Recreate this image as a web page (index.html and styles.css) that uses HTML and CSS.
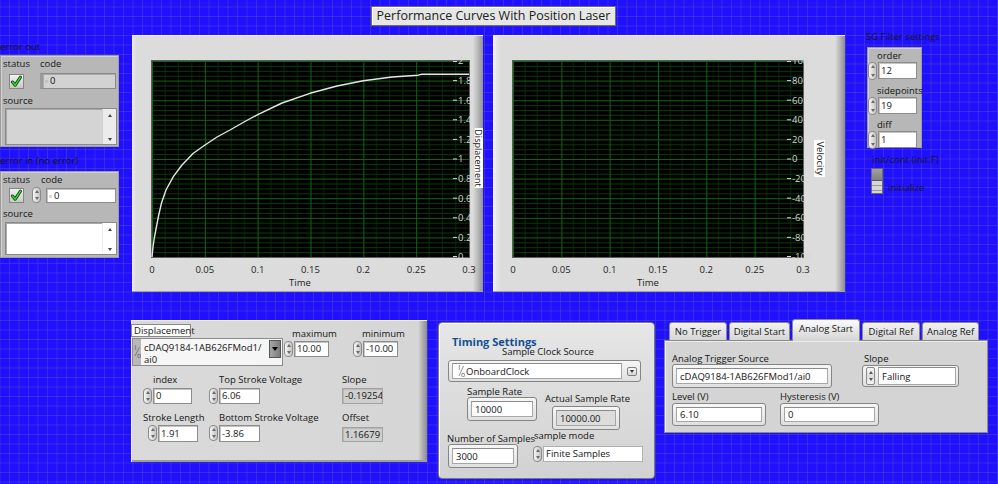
FILE: index.html
```html
<!DOCTYPE html>
<html lang="en">
<head>
<meta charset="utf-8">
<title>Performance Curves With Position Laser</title>
<link rel="stylesheet" href="styles.css">
</head>
<body>
<main class="fp">
  <div class="title">Performance Curves With Position Laser</div>

  <!-- error out -->
  <section class="obj errout">
    <div class="clabel">error out</div>
    <div class="ec ec-out">
      <div class="ec-top">
        <div class="ec-status">
          <span class="lbl">status</span>
          <span class="chk"><svg width="13" height="13" viewBox="0 0 13 13"><path d="M2.5 7 L5.2 10.2 L10.5 2.2" fill="none" stroke="#0b3b0b" stroke-width="3" stroke-linecap="round" stroke-linejoin="round"/><path d="M2.5 7 L5.2 10.2 L10.5 2.2" fill="none" stroke="#35e035" stroke-width="1.4" stroke-linecap="round" stroke-linejoin="round"/></svg></span>
        </div>
        <div class="ec-code">
          <span class="lbl">code</span>
          <div class="codeind"><span class="rep">&#8728;</span>0</div>
        </div>
      </div>
      <span class="lbl src-lbl">source</span>
      <div class="srcbox srcbox-ind"><div class="sbar"><span class="sa up"></span><span class="sa dn"></span></div></div>
    </div>
  </section>

  <!-- error in -->
  <section class="obj errin">
    <div class="clabel">error in (no error)</div>
    <div class="ec ec-in">
      <div class="ec-top">
        <div class="ec-status ec-status-in">
          <span class="lbl">status</span>
          <span class="chk chk-in"><svg width="13" height="13" viewBox="0 0 13 13"><path d="M2.5 7 L5.2 10.2 L10.5 2.2" fill="none" stroke="#0b3b0b" stroke-width="3" stroke-linecap="round" stroke-linejoin="round"/><path d="M2.5 7 L5.2 10.2 L10.5 2.2" fill="none" stroke="#35e035" stroke-width="1.4" stroke-linecap="round" stroke-linejoin="round"/></svg></span>
        </div>
        <div class="ec-code-in">
          <span class="lbl">code</span>
          <div class="nrow code-row"><span class="spin"></span><div class="num code-num"><span class="rep">&#8728;</span>0</div></div>
        </div>
      </div>
      <span class="lbl src-lbl-in">source</span>
      <div class="srcbox srcbox-ctl"><div class="sbar sbar-w"><span class="sa up"></span><span class="sa dn"></span></div></div>
    </div>
  </section>

  <!-- Graph 1 -->
  <section class="graph g1">
    <svg width="351" height="257" viewBox="0 0 351 257">
      <defs>
        <pattern id="pg1" x="20" y="26" width="52.833" height="19.6" patternUnits="userSpaceOnUse">
          <rect width="52.833" height="19.6" fill="#000"/>
          <path d="M13.2 0V19.6M26.4 0V19.6M39.6 0V19.6" stroke="#082608" stroke-width="1"/>
          <path d="M0 5.4H52.833M0 10.3H52.833M0 15.2H52.833" stroke="#0b380b" stroke-width="1"/>
          <path d="M0 0.5H52.833M0.5 0V19.6" stroke="#0f660f" stroke-width="1"/>
        </pattern>
      </defs>
      <rect x="20" y="26" width="317" height="196" fill="url(#pg1)"/>
      <rect x="19.5" y="25.5" width="318" height="197" fill="none" stroke="#5e5e5e"/>
      <polyline fill="none" stroke="#e6e6e6" stroke-width="1.4" stroke-linejoin="round" points="20,222 21,212 22.3,203 24.2,193 26.5,181 29.5,168 34,155 41.3,141.7 50,130 61.3,118.3 73,110 85,102 98,95 112,87 126.3,79.3 150,68 178,58.3 205,51 231.3,45.7 260,42 286,40.2 289,39.3 337,39.3"/>
      <path d="M321 26.5H325M321 45.6H325M321 65.2H325M321 84.8H325M321 104.4H325M321 124H325M321 143.6H325M321 163.2H325M321 182.8H325M321 202.4H325M321 221.5H325" stroke="#d8d8d8" stroke-width="1"/>
      <g class="gy">
        <text x="326" y="29.3">2</text>
        <text x="326" y="48.9">1.8</text>
        <text x="326" y="68.5">1.6</text>
        <text x="326" y="88.1">1.4</text>
        <text x="326" y="107.7">1.2</text>
        <text x="326" y="127.3">1</text>
        <text x="326" y="146.9">0.8</text>
        <text x="326" y="166.5">0.6</text>
        <text x="326" y="186.1">0.4</text>
        <text x="326" y="205.7">0.2</text>
        <text x="326" y="225.3">0</text>
      </g>
      <g class="gx">
        <text x="20" y="237.5">0</text>
        <text x="72.8" y="237.5">0.05</text>
        <text x="125.7" y="237.5">0.1</text>
        <text x="178.5" y="237.5">0.15</text>
        <text x="231.3" y="237.5">0.2</text>
        <text x="284.2" y="237.5">0.25</text>
        <text x="337" y="237.5">0.3</text>
        <text x="168" y="251">Time</text>
      </g>
      <rect x="342.5" y="93" width="8.5" height="60" fill="#fff"/>
      <text class="gname gname-s" transform="translate(343.3,123) rotate(90)">Displacement</text>
    </svg>
  </section>

  <!-- Graph 2 -->
  <section class="graph g2">
    <svg width="352" height="257" viewBox="0 0 352 257">
      <defs>
        <pattern id="pg2" x="20" y="26" width="48.333" height="19.6" patternUnits="userSpaceOnUse">
          <rect width="48.333" height="19.6" fill="#000"/>
          <path d="M12.08 0V19.6M24.17 0V19.6M36.25 0V19.6" stroke="#082608" stroke-width="1"/>
          <path d="M0 5.4H48.333M0 10.3H48.333M0 15.2H48.333" stroke="#0b380b" stroke-width="1"/>
          <path d="M0 0.5H48.333M0.5 0V19.6" stroke="#0f660f" stroke-width="1"/>
        </pattern>
      </defs>
      <rect x="20" y="26" width="290" height="196" fill="url(#pg2)"/>
      <rect x="19.5" y="25.5" width="291" height="197" fill="none" stroke="#5e5e5e"/>
      <path d="M294 26.5H298M294 45.6H298M294 65.2H298M294 84.8H298M294 104.4H298M294 124H298M294 143.6H298M294 163.2H298M294 182.8H298M294 202.4H298M294 221.5H298" stroke="#d8d8d8" stroke-width="1"/>
      <g class="gy">
        <text x="299" y="29.3">100</text>
        <text x="299" y="48.9">80</text>
        <text x="299" y="68.5">60</text>
        <text x="299" y="88.1">40</text>
        <text x="299" y="107.7">20</text>
        <text x="299" y="127.3">0</text>
        <text x="299" y="146.9">-20</text>
        <text x="299" y="166.5">-40</text>
        <text x="299" y="186.1">-60</text>
        <text x="299" y="205.7">-80</text>
        <text x="299" y="225.3">-100</text>
      </g>
      <g class="gx">
        <text x="20" y="237.5">0</text>
        <text x="68.3" y="237.5">0.05</text>
        <text x="116.7" y="237.5">0.1</text>
        <text x="165" y="237.5">0.15</text>
        <text x="213.3" y="237.5">0.2</text>
        <text x="261.7" y="237.5">0.25</text>
        <text x="310" y="237.5">0.3</text>
        <text x="155" y="251">Time</text>
      </g>
      <rect x="321" y="105" width="11" height="37" fill="#fff"/>
      <text class="gname" transform="translate(323.5,123.5) rotate(90)">Velocity</text>
    </svg>
  </section>

  <!-- SG filter -->
  <div class="obj sg-lbl lbl">SG Filter settings</div>
  <section class="obj sg">
    <div class="sg-item">
      <span class="lbl">order</span>
      <div class="nrow"><span class="spin"></span><div class="num">12</div></div>
    </div>
    <div class="sg-item">
      <span class="lbl">sidepoints</span>
      <div class="nrow"><span class="spin"></span><div class="num">19</div></div>
    </div>
    <div class="sg-item">
      <span class="lbl">diff</span>
      <div class="nrow"><span class="spin"></span><div class="num">1</div></div>
    </div>
  </section>

  <section class="obj init">
    <span class="lbl">init/cont (init:F)</span>
    <div class="init-row">
      <div class="sw"><div class="sw-top"></div><div class="sw-bot"></div></div>
      <span class="lbl init-txt">initialize</span>
    </div>
  </section>

  <!-- Displacement panel -->
  <section class="obj dpanel">
    <div class="d-rowa">
      <div class="dsel">
        <span class="dsel-lbl">Displacement</span>
        <div class="ring">
          <span class="io"><svg width="7" height="26" viewBox="0 0 7 26"><text x="0.5" y="11" class="io-t">I</text><line x1="5.5" y1="8" x2="1" y2="17" stroke="#6a6a6a" stroke-width="0.8"/><text x="3" y="19" class="io-t">o</text></svg></span>
          <span class="ring-txt">cDAQ9184-1AB626FMod1/<br>ai0</span>
          <span class="ring-btn"></span>
        </div>
      </div>
      <div class="dnum dmax">
        <span class="lbl">maximum</span>
        <div class="nrow"><span class="spin"></span><div class="num">10.00</div></div>
      </div>
      <div class="dnum dmin">
        <span class="lbl">minimum</span>
        <div class="nrow"><span class="spin"></span><div class="num">-10.00</div></div>
      </div>
    </div>
    <div class="d-grid">
      <div class="dc dc-ind">
        <span class="lbl ml10">index</span>
        <div class="nrow"><span class="spin"></span><div class="num w39">0</div></div>
      </div>
      <div class="dc">
        <span class="lbl ml10">Top Stroke Voltage</span>
        <div class="nrow"><span class="spin"></span><div class="num w41">6.06</div></div>
      </div>
      <div class="dc">
        <span class="lbl">Slope</span>
        <div class="indv">-0.19254</div>
      </div>
      <div class="dc dc-r2">
        <span class="lbl">Stroke Length</span>
        <div class="nrow ml5"><span class="spin"></span><div class="num w40">1.91</div></div>
      </div>
      <div class="dc dc-r2">
        <span class="lbl ml10">Bottom Stroke Voltage</span>
        <div class="nrow"><span class="spin"></span><div class="num w41">-3.86</div></div>
      </div>
      <div class="dc dc-r2">
        <span class="lbl">Offset</span>
        <div class="indv indv-off">1.16679</div>
      </div>
    </div>
  </section>

  <!-- Timing settings -->
  <section class="obj tpanel">
    <div class="t-head">Timing Settings</div>
    <span class="lbl t-scs">Sample Clock Source</span>
    <div class="sf t-ring">
      <div class="sf-in t-ring-in">
        <span class="io io-w"><svg width="7" height="14" viewBox="0 0 7 14"><text x="0.3" y="6" class="io-t">I</text><line x1="5.5" y1="2" x2="1" y2="12" stroke="#777" stroke-width="0.8"/><text x="3" y="13" class="io-t">o</text></svg></span>
        <span>OnboardClock</span>
      </div>
      <span class="t-ring-btn"></span>
    </div>
    <div class="t-row1">
      <div class="t-c1">
        <span class="lbl">Sample Rate</span>
        <div class="sf t-f1"><div class="sf-in">10000</div></div>
      </div>
      <div class="t-c2">
        <span class="lbl">Actual Sample Rate</span>
        <div class="sf t-f2"><div class="sf-in sf-grey">10000.00</div></div>
      </div>
    </div>
    <div class="t-row2">
      <div class="t-c3">
        <span class="lbl">Number of Samples</span>
        <div class="sf t-f3"><div class="sf-in">3000</div></div>
      </div>
      <div class="t-c4">
        <span class="lbl t-sm">sample mode</span>
        <div class="nrow t-smrow"><span class="spin"></span><div class="num t-smf">Finite Samples</div></div>
      </div>
    </div>
  </section>

  <!-- Trigger tabs -->
  <section class="obj tabs">
    <div class="tabrow">
      <span class="tab w58">No Trigger</span>
      <span class="tab w61">Digital Start</span>
      <span class="tab sel w68">Analog Start</span>
      <span class="tab w58">Digital Ref</span>
      <span class="tab w57">Analog Ref</span>
    </div>
    <div class="tabbody">
      <div class="tb-row1">
        <div class="tb-c1">
          <span class="lbl">Analog Trigger Source</span>
          <div class="sf tb-src"><div class="sf-in">cDAQ9184-1AB626FMod1/ai0</div></div>
        </div>
        <div class="tb-c2">
          <span class="lbl ml2">Slope</span>
          <div class="sf tb-slope">
            <span class="sspin"></span>
            <div class="sf-in tb-slope-in">Falling</div>
          </div>
        </div>
      </div>
      <div class="tb-row2">
        <div class="tb-c3">
          <span class="lbl">Level (V)</span>
          <div class="sf tb-lvl"><div class="sf-in">6.10</div></div>
        </div>
        <div class="tb-c4">
          <span class="lbl">Hysteresis (V)</span>
          <div class="sf tb-hys"><div class="sf-in">0</div></div>
        </div>
      </div>
    </div>
  </section>
</main>
</body>
</html>
```

FILE: styles.css
```css
* { box-sizing: border-box; margin: 0; padding: 0; }
html, body { width: 998px; height: 484px; overflow: hidden; }
body {
  font-family: "Open Sans", "Noto Sans", "DejaVu Sans", sans-serif;
  font-size: 9.5px;
  line-height: 11px;
  color: #151515;
}

.fp {
  position: relative;
  width: 998px;
  height: 484px;
  background-color: #1f10ff;
  background-image:
    linear-gradient(to right, rgba(90, 80, 190, .45) 1px, transparent 1px),
    linear-gradient(to bottom, rgba(90, 80, 190, .45) 1px, transparent 1px);
  background-size: 9.5px 9.5px;
  background-position: -0.5px -3px;
}

.obj { position: absolute; }
.lbl { display: block; white-space: nowrap; line-height: 11px; }
.ml10 { margin-left: 10px; }
.ml5 { margin-left: 5px; }
.ml2 { margin-left: 2px; }

.title {
  position: absolute;
  left: 371px; top: 6px;
  width: 245px; height: 20px;
  background: #e6e6e6;
  border: 1px solid #6f6f60;
  box-shadow: inset 1px 1px 0 #fff;
  font-size: 12.5px;
  line-height: 18px;
  text-align: center;
  color: #202020;
}

/* generic controls */
.nrow { display: flex; align-items: flex-start; }
.spin {
  position: relative;
  flex: none;
  width: 9px; height: 16px;
  border: 1px solid #8a8a8a;
  border-radius: 4px;
  background: linear-gradient(to right, #f6f6f6, #c2c2c2);
}
.spin::before, .spin::after {
  content: "";
  position: absolute;
  left: 1.5px;
  border-left: 2px solid transparent;
  border-right: 2px solid transparent;
}
.spin::before { top: 2px; border-bottom: 3px solid #6a6a6a; }
.spin::after { bottom: 2px; border-top: 3px solid #6a6a6a; }

.num {
  height: 16px;
  margin-left: 1px;
  background: #fff;
  border: 1px solid #8c8c8c;
  box-shadow: inset 1px 1px 0 #c4c4c4;
  padding-left: 2px;
  line-height: 14px;
  white-space: nowrap;
  overflow: hidden;
}
.rep { color: #a8a8a8; margin-right: 1px; font-size: 8px; }

.chk {
  display: flex;
  align-items: center;
  justify-content: center;
  width: 15px; height: 15px;
  border: 1px solid #858585;
  background: linear-gradient(#f2f2f2, #c8c8c8);
}

/* error clusters */
.errout { left: 0; top: 41px; width: 119px; }
.errin { left: 0; top: 155px; width: 119px; }
.clabel { height: 14px; line-height: 12px; white-space: nowrap; color: #111; }
.errin .clabel { height: 16px; }
.ec {
  background: #b7b7b7;
  border: 1px solid #9c9c9c;
  box-shadow: inset 1px 1px 0 #d0d0d0;
  padding: 2px 2px 0 2px;
}
.ec-out { height: 92px; }
.ec-in { height: 87px; }
.ec-top { display: flex; }
.ec-status { width: 38px; }
.ec-status .chk { margin: 5px 0 0 6px; }
.ec-status-in { width: 29px; }
.ec-status-in .chk { margin: 3px 0 0 6px; }
.codeind {
  margin-top: 4px;
  width: 76px; height: 16px;
  background: #d2d2d2;
  border: 1px solid #8a8a8a;
  border-left: 3px solid #9a9a9a;
  box-shadow: inset 1px 1px 0 #aaa;
  line-height: 14px;
  padding-left: 1px;
}
.ec-code-in .lbl { margin-left: 9px; }
.code-row { margin-top: 2px; }
.code-num { width: 70px; height: 15px; margin-left: 5px; margin-top: 1px; line-height: 13px; padding-left: 1px; }
.src-lbl { margin-top: 6px; }
.src-lbl-in { margin-top: 5px; }
.srcbox {
  display: flex;
  justify-content: flex-end;
  margin: 2px 0 0 2px;
  width: 112px;
  border: 1px solid #8a8a8a;
  box-shadow: inset 1px 1px 0 #a8a8a8;
}
.srcbox-ind { height: 37px; background: #d4d4d4; }
.srcbox-ctl { height: 33px; margin-top: 3px; background: #fff; }
.sbar {
  width: 14px;
  display: flex;
  flex-direction: column;
  justify-content: space-between;
  align-items: center;
  padding: 5px 0 3px;
  background: #ececec;
  border-left: 1px solid #d0d0d0;
}
.sbar-w { background: #fff; border-left-color: #eee; }
.sa { width: 0; height: 0; border-left: 2.5px solid transparent; border-right: 2.5px solid transparent; }
.sa.up { border-bottom: 3px solid #444; }
.sa.dn { border-top: 3px solid #444; }

/* graphs */
.graph { position: absolute; top: 35px; height: 257px; box-shadow: inset 0 1px 0 #f2f2f2, inset 0 -1px 0 #a0a0a0; }
.graph svg { display: block; }
.g1 {
  left: 132px; width: 351px;
  background: linear-gradient(to right, #ececec 0, #dcdcdc 4px, #dcdcdc 341px, #b6b6b6 346px, #9a9a9a 350px, #8a8a8a 351px);
}
.g2 {
  left: 493px; width: 352px;
  background: linear-gradient(to right, #f8f8f8 0, #e4e4e4 4px, #dcdcdc 8px, #dcdcdc 342px, #b6b6b6 347px, #8c8c8c 352px);
}
.gx text { font-size: 9.5px; fill: #1c1c1c; text-anchor: middle; }
.gy text { font-size: 9.5px; fill: #d6d6d6; }
.gname { font-size: 9.5px; fill: #111; text-anchor: middle; }
.gname-s { font-size: 9px; }

/* SG filter */
.sg-lbl { left: 866px; top: 31px; }
.sg {
  left: 867px; top: 47px;
  width: 55px; height: 101px;
  background: #b7b7b7;
  border: 1px solid #9c9c9c;
  box-shadow: inset 1px 1px 0 #d0d0d0;
  padding-top: 2px;
}
.sg-item .lbl { margin-left: 9px; }
.sg-item .nrow { margin-top: 1px; }
.sg-item .spin { height: 18px; }
.sg-item .num { width: 39px; height: 17px; line-height: 15px; }
.sg-item + .sg-item { margin-top: 4.5px; }

.init { left: 872px; top: 154px; }
.init-row { display: flex; align-items: flex-end; margin: 2.5px 0 0 -1px; }
.sw {
  width: 12px; height: 26px;
  border: 1px solid #6a6a6a;
  display: flex;
  flex-direction: column;
  background: #c8c8c8;
}
.sw-top { height: 12px; background: linear-gradient(#a0a0a0, #808080); border-bottom: 1px solid #5a5a5a; }
.sw-bot { flex: 1; background: repeating-linear-gradient(#d6d6d6 0 4px, #9a9a9a 4px 5px); }
.init-txt { margin: 0 0 1px 5px; }

/* Displacement panel */
.dpanel {
  left: 131px; top: 320px;
  width: 296px; height: 142px;
  background: linear-gradient(to right, #dadada 0, #d6d6d6 287px, #acacac 292px, #8c8c8c 296px);
  box-shadow: inset 1px 1px 0 #f2f2f2, inset 0 -2px 0 #9c9c9c;
  padding-top: 4px;
}
.d-rowa { display: flex; align-items: flex-start; }
.dsel { width: 152px; }
.dsel-lbl {
  display: block;
  width: 60px; height: 13px;
  background: #fff;
  border: 1px solid #8a8a8a;
  padding-left: 2px;
  line-height: 11px;
  white-space: nowrap;
}
.ring {
  display: flex;
  align-items: flex-start;
  margin: 1px 0 0 1px;
  width: 151px; height: 28px;
  background: #f6f6f6;
  border: 1px solid #8a8a8a;
}
.io { display: block; flex: none; width: 8px; height: 26px; background: #b8b8b8; padding-left: 0.5px; }
.io svg { display: block; }
.io-t { font-size: 7px; fill: #555; }
.ring-txt { flex: 1; padding: 3px 0 0 3px; line-height: 12px; font-size: 9.5px; white-space: nowrap; }
.ring-btn {
  display: flex;
  align-items: center;
  justify-content: center;
  width: 12px; height: 18px;
  margin: 1px 1px 0 0;
  background: linear-gradient(to right, #a6a6a6, #7c7c7c);
  border: 1px solid #555;
}
.ring-btn::after {
  content: "";
  border-left: 3px solid transparent;
  border-right: 3px solid transparent;
  border-top: 4px solid #000;
}
.dnum { padding-top: 4px; }
.dnum .nrow { margin-top: 2px; }
.dnum .num { width: 35px; }
.dmax { width: 69px; margin-left: 1px; }
.dmax .lbl { margin-left: 8px; }
.dmin .lbl { margin-left: 9px; }

.d-grid {
  display: grid;
  grid-template-columns: 66px 133px 60px;
  grid-template-rows: 38px 40px;
  margin: 8px 0 0 12px;
}
.dc .nrow { margin-top: 3px; }
.dc-r2 .nrow { margin-top: 2px; }
.dc-r2 .num { height: 17px; line-height: 15px; }
.w39 { width: 39px; }
.w40 { width: 40px; }
.w41 { width: 41px; }
.indv {
  margin-top: 3px;
  width: 41px; height: 16px;
  background: #cfcfcf;
  border: 1px solid #a2a2a2;
  box-shadow: inset 1px 1px 0 #b8b8b8;
  line-height: 14px;
  padding-left: 2px;
  white-space: nowrap;
  overflow: hidden;
}
.indv-off { margin-top: 4px; height: 15px; line-height: 13px; }

/* system style fields */
.sf {
  border: 1px solid #858585;
  border-radius: 3px;
  background: linear-gradient(#f6f6f6, #e0e0e0);
  padding: 3px;
}
.sf-in {
  height: 100%;
  background: #fff;
  border: 1px solid #a6a6a6;
  border-top-color: #8c8c8c;
  padding-left: 3px;
  display: flex;
  align-items: center;
  white-space: nowrap;
}
.sf-grey { background: #dcdcdc; }

/* Timing panel */
.tpanel {
  left: 438px; top: 322px;
  width: 217px; height: 157px;
  border: 1px solid #7a7a7a;
  border-radius: 4px;
  background: linear-gradient(#e6e6e6, #d2d2d2);
  box-shadow: inset 1px 1px 0 #fafafa;
  padding-top: 13px;
}
.t-head { margin-left: 13px; font-size: 11px; font-weight: 700; line-height: 11px; color: #134f93; white-space: nowrap; }
.t-scs { margin: -1px 0 0 63px; }
.t-ring { position: relative; display: flex; align-items: center; margin: 3px 0 0 9px; width: 193px; height: 22px; padding: 2px 3px; }
.t-ring-in { width: 173px; height: 16px; padding-left: 4px; }
.io-w { width: 8px; height: 14px; background: transparent; margin-right: 1px; }
.t-ring-btn {
  display: flex;
  align-items: center;
  justify-content: center;
  width: 10px; height: 9px;
  margin-left: 5px;
  border: 1px solid #808080;
  border-radius: 2px;
  background: linear-gradient(#fafafa, #d6d6d6);
}
.t-ring-btn::after {
  content: "";
  border-left: 2.5px solid transparent;
  border-right: 2.5px solid transparent;
  border-top: 3px solid #333;
}
.t-row1 { display: flex; align-items: flex-start; margin-top: 4px; }
.t-c1 { width: 78px; margin-left: 28px; }
.t-f1 { width: 70px; height: 24px; }
.t-c2 { padding-top: 7px; }
.t-f2 { width: 68px; height: 24px; margin: 2px 0 0 7px; }
.t-row2 { display: flex; align-items: flex-start; }
.t-c3 { width: 86px; margin-left: 8px; padding-top: 3px; }
.t-f3 { width: 70px; height: 24px; margin-left: 1px; }
.t-sm { margin-left: 1px; }
.t-smrow { margin-top: 5px; }
.t-smf { width: 100px; height: 16px; margin-left: 1px; border-color: #b0b0b0; box-shadow: none; line-height: 14px; padding-left: 2px; }

/* Tabs */
.tabs { left: 663px; top: 319px; width: 325px; height: 114px; display: flex; flex-direction: column; }
.tabrow { display: flex; align-items: flex-end; height: 21px; padding-left: 6px; gap: 2px; }
.tab {
  display: block;
  height: 18px;
  border: 1px solid #8a8a8a;
  border-bottom: none;
  border-radius: 3px 3px 0 0;
  background: linear-gradient(#f2f2f2, #d6d6d6);
  text-align: center;
  line-height: 17px;
  white-space: nowrap;
}
.tab.sel { height: 22px; margin-bottom: -1px; background: linear-gradient(#fbfbfb, #d4d4d4); line-height: 18px; position: relative; }
.w58 { width: 58px; }
.w61 { width: 61px; }
.w68 { width: 68px; }
.w57 { width: 57px; }
.tabbody {
  flex: 1;
  margin-left: 1px;
  background: #d4d4d4;
  border: 1px solid #8a8a8a;
  box-shadow: inset 1px 1px 0 #ededed;
  padding: 12px 0 0 7px;
}
.tb-row1 { display: flex; align-items: flex-start; }
.tb-c1 { width: 190px; }
.tb-src { width: 160px; height: 24px; }
.tb-slope { display: flex; align-items: stretch; width: 97px; height: 22px; margin-top: 1px; padding: 1px 2px 1px 3px; gap: 3px; }
.tb-slope-in { flex: 1; height: auto; }
.sspin {
  position: relative;
  width: 9px;
  border: 1px solid #8a8a8a;
  border-radius: 2px;
  background: linear-gradient(#fafafa 0, #dedede 48%, #a0a0a0 50%, #dedede 52%, #f4f4f4 100%);
}
.sspin::before, .sspin::after {
  content: "";
  position: absolute;
  left: 1.5px;
  border-left: 2px solid transparent;
  border-right: 2px solid transparent;
}
.sspin::before { top: 3px; border-bottom: 3px solid #555; }
.sspin::after { bottom: 3px; border-top: 3px solid #555; }
.tb-row2 { display: flex; align-items: flex-start; margin-top: 3px; }
.tb-c3 { width: 108px; }
.tb-lvl { width: 94px; height: 23px; margin-top: 1px; }
.tb-hys { width: 99px; height: 23px; margin-top: 1px; }
```
